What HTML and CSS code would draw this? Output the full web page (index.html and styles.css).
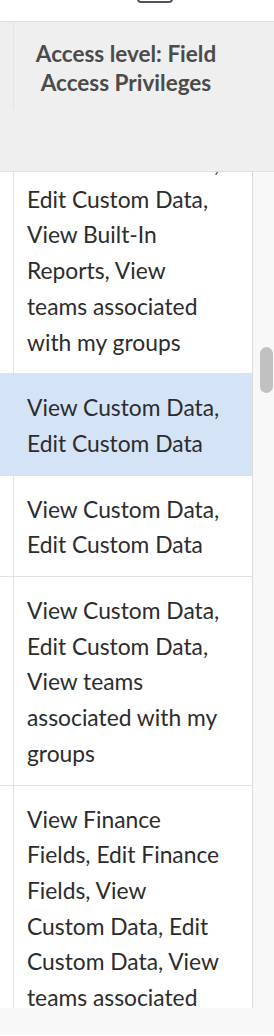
FILE: index.html
```html
<!DOCTYPE html>
<html lang="en">
<head>
  <meta charset="UTF-8" />
  <meta name="viewport" content="width=device-width, initial-scale=1.0"/>
  <title>Field Access Privileges</title>
  <link rel="stylesheet" href="styles.css">
</head>
<body>

  <div class="topbar">
    <span class="toggle"></span>
  </div>

  <div class="grid">
    <div class="grid-head">
      <div class="resize-line"></div>
      <div class="head-cell">Access level: Field Access Privileges</div>
    </div>

    <div class="grid-body">
      <div class="rows">
        <div class="row">
          <div class="spacer"></div>
          <div class="cell">View Custom Data, Edit Custom Data, View Built-In Reports, View teams associated with my groups</div>
        </div>
        <div class="row selected">
          <div class="spacer"></div>
          <div class="cell">View Custom Data, Edit Custom Data</div>
        </div>
        <div class="row">
          <div class="spacer"></div>
          <div class="cell">View Custom Data, Edit Custom Data</div>
        </div>
        <div class="row">
          <div class="spacer"></div>
          <div class="cell">View Custom Data, Edit Custom Data, View teams associated with my groups</div>
        </div>
        <div class="row">
          <div class="spacer"></div>
          <div class="cell">View Finance Fields, Edit Finance Fields, View Custom Data, Edit Custom Data, View teams associated with my groups</div>
        </div>
      </div>

      <div class="vscroll">
        <div class="thumb"></div>
      </div>
    </div>

    <div class="hscroll"></div>
  </div>

</body>
</html>
```

FILE: styles.css
```css
html, body {
  margin: 0;
  padding: 0;
  height: 100%;
  background: #fff;
  font-family: 'Lato', 'Open Sans', sans-serif;
  overflow: hidden;
}

.topbar {
  height: 22px;
  border-bottom: 1px solid #e1e1e1;
  display: flex;
  justify-content: center;
  padding-left: 36px;
  box-sizing: border-box;
  overflow: hidden;
}

.toggle {
  display: block;
  width: 36px;
  height: 20px;
  margin-top: -17px;
  border: 2px solid #4d5262;
  border-radius: 4px;
  box-sizing: border-box;
}

.grid {
  display: flex;
  flex-direction: column;
}

/* column header */
.grid-head {
  position: relative;
  height: 149px;
  background: #efefef;
  border-bottom: 1px solid #e1e1e1;
}

.resize-line {
  position: absolute;
  left: 13px;
  top: 0;
  width: 1px;
  height: 88px;
  background: #e4e4e4;
}

.head-cell {
  width: 252px;
  padding: 17px 20px 0;
  box-sizing: border-box;
  text-align: center;
  font-size: 22.5px;
  font-weight: bold;
  line-height: 29px;
  color: #4b4b4b;
}

/* rows */
.grid-body {
  display: flex;
  height: 836px;
  overflow: hidden;
}

.rows {
  width: 252px;
  margin-top: -42px;
  border-right: 1px solid #dcdcdc;
}

.row {
  display: flex;
  border-bottom: 1px solid #e1e1e1;
  background: #fff;
}

.row.selected {
  background: #d5e3f7;
}

.spacer {
  width: 13px;
  flex-shrink: 0;
  border-right: 1px solid #e1e1e1;
}

.cell {
  flex: 1;
  padding: 16px 25px 13px 13px;
  font-size: 22.8px;
  line-height: 35.7px;
  color: #2c2c2c;
}

.vscroll {
  flex: 1;
  background: #f8f8f8;
}

.thumb {
  width: 13px;
  height: 46px;
  margin: 175px 0 0 7px;
  border-radius: 7px;
  background: #c1c1c1;
}

.hscroll {
  height: 27px;
  background: #f8f8f8;
}
```
